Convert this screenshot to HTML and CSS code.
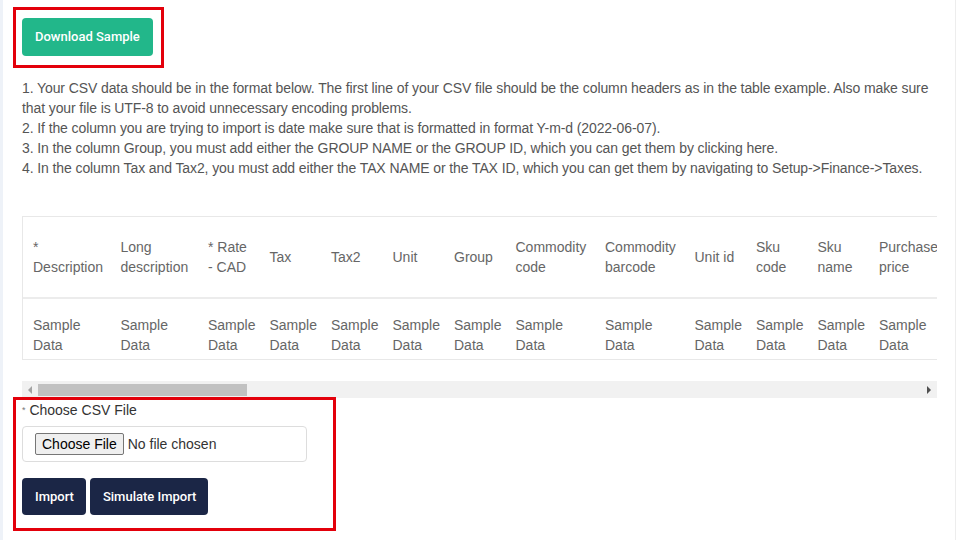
FILE: index.html
```html
<!DOCTYPE html>
<html lang="en">
<head>
    <title>Import Items</title>
    <meta charset="UTF-8" />
    <meta name="viewport" content="width=device-width, initial-scale=1.0" />
    <link rel="stylesheet" href="styles.css">
</head>
<body>
    <div class="page">
        <div class="highlight sample-box">
            <a href="#" class="btn btn-green">Download Sample</a>
        </div>

        <div class="instructions">
            <p>1. Your CSV data should be in the format below. The first line of your CSV file should be the column headers as in the table example. Also make sure that your file is UTF-8 to avoid unnecessary encoding problems.</p>
            <p>2. If the column you are trying to import is date make sure that is formatted in format Y-m-d (2022-06-07).</p>
            <p>3. In the column Group, you must add either the GROUP NAME or the GROUP ID, which you can get them by clicking <a href="#">here</a>.</p>
            <p>4. In the column Tax and Tax2, you must add either the TAX NAME or the TAX ID, which you can get them by navigating to Setup-&gt;Finance-&gt;Taxes.</p>
        </div>

        <div class="table-scroll">
            <table class="sample-table">
                <colgroup>
                    <col class="col-wide">
                    <col class="col-wide">
                    <col class="col-narrow">
                    <col class="col-narrow">
                    <col class="col-narrow">
                    <col class="col-narrow">
                    <col class="col-narrow">
                    <col class="col-mid">
                    <col class="col-mid">
                    <col class="col-narrow">
                    <col class="col-narrow">
                    <col class="col-narrow">
                    <col>
                </colgroup>
                <thead>
                    <tr>
                        <th>* Description</th>
                        <th>Long description</th>
                        <th>* Rate <span class="nowrap">- CAD</span></th>
                        <th>Tax</th>
                        <th>Tax2</th>
                        <th>Unit</th>
                        <th>Group</th>
                        <th>Commodity code</th>
                        <th>Commodity barcode</th>
                        <th>Unit id</th>
                        <th>Sku code</th>
                        <th>Sku name</th>
                        <th>Purchase price</th>
                    </tr>
                </thead>
                <tbody>
                    <tr>
                        <td>Sample Data</td>
                        <td>Sample Data</td>
                        <td>Sample Data</td>
                        <td>Sample Data</td>
                        <td>Sample Data</td>
                        <td>Sample Data</td>
                        <td>Sample Data</td>
                        <td>Sample Data</td>
                        <td>Sample Data</td>
                        <td>Sample Data</td>
                        <td>Sample Data</td>
                        <td>Sample Data</td>
                        <td>Sample Data</td>
                    </tr>
                </tbody>
            </table>
        </div>
        <div class="scrollbar">
            <span class="arrow arrow-left"></span>
            <span class="thumb"></span>
            <span class="arrow arrow-right"></span>
        </div>

        <form class="highlight upload-box">
            <label for="file_csv" class="field-label"><span class="req">*</span> Choose CSV File</label>
            <div class="file-field">
                <input type="file" id="file_csv" name="file_csv">
            </div>
            <div class="actions">
                <button type="button" class="btn btn-navy">Import</button>
                <button type="button" class="btn btn-navy">Simulate Import</button>
            </div>
        </form>
    </div>
</body>
</html>
```

FILE: styles.css
```css
* {
    margin: 0;
    padding: 0;
    box-sizing: border-box;
}

body {
    font-family: "Liberation Sans", Arial, sans-serif;
    font-size: 14px;
    line-height: 20px;
    color: #555;
    background: #fff;
}

.page {
    min-height: 540px;
    margin-right: 4px;
    border-left: 3px solid #eef2f8;
    border-right: 1px solid #ededed;
    padding: 7px 18px 0 19px;
}

/* red outlines around the areas of interest */
.highlight {
    border: 3px solid #e3000b;
}

.sample-box {
    display: inline-block;
    margin-left: -9px;
    padding: 8px 8px 9px 6px;
}

.btn {
    display: inline-flex;
    align-items: center;
    height: 38px;
    padding: 0 13px;
    border: none;
    border-radius: 4px;
    font-family: Roboto, "Liberation Sans", sans-serif;
    font-size: 13px;
    font-weight: 500;
    color: #fff;
    text-decoration: none;
    cursor: pointer;
}

.btn-green {
    background-color: #22b78a;
}

.btn-navy {
    height: 37px;
    padding: 0 12px 0 13px;
    background-color: #1b2646;
}

.instructions {
    margin-top: 10px;
    color: #555;
    letter-spacing: -0.1px;
}

.instructions a {
    color: #555;
    text-decoration: none;
}

/* sample table */
.table-scroll {
    margin-top: 38px;
    overflow: hidden;
    border-left: 1px solid #e8e8e8;
}

.sample-table {
    table-layout: fixed;
    width: 100%;
    border-collapse: collapse;
    color: #666;
}

.col-wide {
    width: 87.5px;
}

.col-narrow {
    width: 61.5px;
}

.col-mid {
    width: 89.5px;
}

.sample-table th,
.sample-table td {
    text-align: left;
    font-weight: normal;
    padding: 16px 4px 4px 10px;
    border-bottom: 1px solid #e8e8e8;
    white-space: normal;
}

.sample-table th:last-child,
.sample-table td:last-child {
    padding-right: 0;
}

.sample-table th {
    padding-top: 20px;
    padding-bottom: 20px;
    vertical-align: middle;
    border-top: 1px solid #e8e8e8;
    border-bottom: 2px solid #ececec;
}

.sample-table td {
    vertical-align: top;
}

.nowrap {
    white-space: nowrap;
}

/* horizontal scrollbar of the table */
.scrollbar {
    display: flex;
    align-items: center;
    height: 17px;
    margin-top: 21px;
    background: #f1f1f1;
}

.arrow {
    width: 16px;
    height: 17px;
    display: flex;
    align-items: center;
    justify-content: center;
}

.arrow::before {
    content: "";
    border-top: 4px solid transparent;
    border-bottom: 4px solid transparent;
}

.arrow-left::before {
    border-right: 4px solid #a3a3a3;
}

.arrow-right {
    margin-left: auto;
}

.arrow-right::before {
    border-left: 4px solid #505050;
}

.thumb {
    width: 209px;
    height: 12px;
    background: #c1c1c1;
}

/* upload form */
.upload-box {
    width: 323px;
    margin: -1px 0 0 -9px;
    padding: 0 6px 13px;
}

.field-label {
    display: block;
    color: #333;
}

.req {
    font-size: 9px;
    color: #777;
    vertical-align: 2px;
}

.file-field {
    width: 285px;
    height: 36px;
    margin-top: 6px;
    padding: 6px 12px;
    border: 1px solid #ddd;
    border-radius: 4px;
}

.file-field input {
    font-family: "Liberation Sans", Arial, sans-serif;
    font-size: 14px;
    color: #333;
}

.file-field input::file-selector-button {
    height: 22px;
    margin-right: 4px;
    padding: 0 6px;
    font-family: "Liberation Sans", Arial, sans-serif;
    font-size: 14px;
    color: #000;
    background: #efefef;
    border: 1px solid #767676;
    border-radius: 2px;
}

.actions {
    display: flex;
    gap: 4px;
    margin-top: 16px;
}
```
